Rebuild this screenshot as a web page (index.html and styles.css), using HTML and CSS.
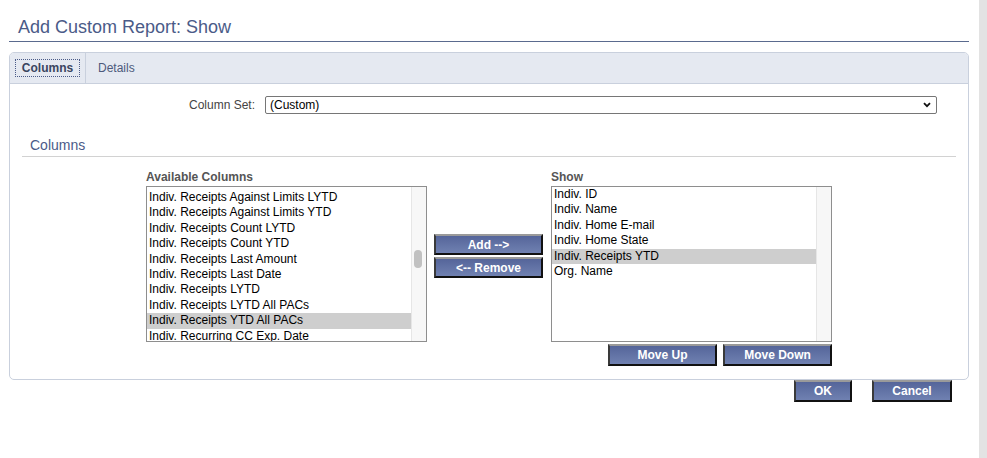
FILE: index.html
```html
<!DOCTYPE html>
<html lang="en">
<head>
<meta charset="utf-8">
<title>Add Custom Report: Show</title>
<link rel="stylesheet" href="styles.css">
</head>
<body>
<div class="page">
  <h1 class="page-title">Add Custom Report: Show</h1>

  <div class="panel">
    <div class="tabs">
      <div class="tab tab-active"><span class="tab-focus">Columns</span></div>
      <div class="tab">Details</div>
    </div>

    <div class="panel-body">
      <div class="set-row">
        <label class="set-label">Column Set:</label>
        <div class="select">
          <span class="select-value">(Custom)</span>
          <svg class="select-arrow" width="8" height="6" viewBox="0 0 8 6"><path d="M1 1.2 L4 4.2 L7 1.2" fill="none" stroke="#111" stroke-width="1.8"/></svg>
        </div>
      </div>

      <div class="section">
        <h2 class="section-title">Columns</h2>
      </div>

      <div class="picker">
        <div class="picker-col">
          <div class="list-label">Available Columns</div>
          <div class="listbox">
            <div class="list-items list-items-scrolled">
              <div class="list-item">Indiv. Receipts Against Limits LYTD</div>
              <div class="list-item">Indiv. Receipts Against Limits YTD</div>
              <div class="list-item">Indiv. Receipts Count LYTD</div>
              <div class="list-item">Indiv. Receipts Count YTD</div>
              <div class="list-item">Indiv. Receipts Last Amount</div>
              <div class="list-item">Indiv. Receipts Last Date</div>
              <div class="list-item">Indiv. Receipts LYTD</div>
              <div class="list-item">Indiv. Receipts LYTD All PACs</div>
              <div class="list-item is-selected">Indiv. Receipts YTD All PACs</div>
              <div class="list-item">Indiv. Recurring CC Exp. Date</div>
            </div>
            <div class="list-track"><div class="list-thumb"></div></div>
          </div>
        </div>

        <div class="picker-actions">
          <button class="btn btn-wide">Add --&gt;</button>
          <button class="btn btn-wide">&lt;-- Remove</button>
        </div>

        <div class="picker-col">
          <div class="list-label">Show</div>
          <div class="listbox">
            <div class="list-items">
              <div class="list-item">Indiv. ID</div>
              <div class="list-item">Indiv. Name</div>
              <div class="list-item">Indiv. Home E-mail</div>
              <div class="list-item">Indiv. Home State</div>
              <div class="list-item is-selected">Indiv. Receipts YTD</div>
              <div class="list-item">Org. Name</div>
            </div>
            <div class="list-track"></div>
          </div>
          <div class="order-buttons">
            <button class="btn btn-wide">Move Up</button>
            <button class="btn btn-wide">Move Down</button>
          </div>
        </div>
      </div>
    </div>
  </div>

  <div class="footer">
    <button class="btn btn-ok">OK</button>
    <button class="btn btn-cancel">Cancel</button>
  </div>
</div>
<div class="side-strip"></div>
</body>
</html>
```

FILE: styles.css
```css
* {
  box-sizing: border-box;
}

html, body {
  height: 100%;
}

body {
  margin: 0;
  display: flex;
  background: #fff;
  font-family: "Liberation Sans", Arial, sans-serif;
  font-size: 12px;
  color: #000;
}

.page {
  width: 979px;
  padding: 0 10px 0 9px;
}

.side-strip {
  width: 8px;
  background: #e3e3e3;
}

/* Title */
.page-title {
  margin: 0;
  padding: 16px 0 3px 9px;
  font-size: 18px;
  line-height: 22px;
  font-weight: normal;
  color: #4b5b88;
  border-bottom: 1px solid #5a6a8e;
}

/* Panel with tabs */
.panel {
  margin-top: 10px;
  border: 1px solid #c9d0dd;
  border-radius: 5px;
  overflow: hidden;
}

.tabs {
  display: flex;
  height: 31px;
  background: #e5e9f1;
  border-bottom: 1px solid #c9d0dd;
}

.tab {
  display: flex;
  align-items: center;
  padding: 0 12px;
  color: #4d5a7c;
  line-height: 14px;
}

.tab-active {
  width: 76px;
  justify-content: center;
  padding: 0;
  border-right: 1px solid #c9d0dd;
  font-weight: bold;
  color: #3a4560;
}

.tab-focus {
  display: inline-block;
  padding: 1px 6px;
  border: 1px dotted #4b5b88;
  line-height: 14px;
}

.panel-body {
  padding: 12px 0 13px;
}

/* Column set row */
.set-row {
  display: flex;
  align-items: center;
}

.set-label {
  width: 245px;
  margin-right: 10px;
  text-align: right;
  color: #444;
}

.select {
  width: 672px;
  height: 18px;
  display: flex;
  align-items: center;
  justify-content: space-between;
  padding: 0 5px 0 4px;
  border: 1px solid #767676;
  border-radius: 2px;
  background: #fff;
}

.select-value {
  line-height: 16px;
}

/* Section heading */
.section {
  margin: 23px 12px 0;
}

.section-title {
  margin: 0;
  padding: 0 0 3px 8px;
  font-size: 14px;
  line-height: 16px;
  font-weight: normal;
  color: #4b5b88;
  border-bottom: 1px solid #d2d2d2;
}

/* Two-list picker */
.picker {
  display: flex;
  margin: 13px 0 0 136px;
}

.picker-col {
  width: 281px;
  display: flex;
  flex-direction: column;
}

.list-label {
  font-weight: bold;
  color: #555;
  line-height: 14px;
  margin-bottom: 2px;
}

.listbox {
  height: 156px;
  display: flex;
  border: 1px solid #8e8e8e;
  background: #fff;
  overflow: hidden;
}

.list-items {
  flex: 1;
  overflow: hidden;
}

.list-items-scrolled {
  padding-top: 3px;
}

.list-item {
  height: 15.4px;
  line-height: 15.4px;
  padding-left: 2px;
  white-space: nowrap;
}

.list-item.is-selected {
  background: #cecece;
}

.list-track {
  width: 15px;
  flex: none;
  background: #f7f7f7;
  border-left: 1px solid #e6e6e6;
  padding: 63px 0 0 2px;
}

.list-thumb {
  width: 8px;
  height: 18px;
  border-radius: 4px;
  background: #c1c1c1;
}

.picker-actions {
  width: 109px;
  margin: 0 8px 0 7px;
  padding-top: 64px;
  display: flex;
  flex-direction: column;
  gap: 2px;
}

.order-buttons {
  display: flex;
  justify-content: flex-end;
  gap: 6px;
  margin-top: 2px;
}

/* Buttons */
.btn {
  height: 22px;
  padding: 0;
  font-family: "Liberation Sans", Arial, sans-serif;
  font-size: 12px;
  font-weight: bold;
  color: #fff;
  background: linear-gradient(#55659a, #7081b1);
  border-style: solid;
  border-width: 2px;
  border-color: #9a9a9a #111 #111 #3a3a3a;
  line-height: 18px;
}

.picker-actions .btn {
  height: 21px;
}

.btn-wide {
  width: 109px;
}

.btn-ok {
  width: 58px;
}

.btn-cancel {
  width: 80px;
}

.footer {
  display: flex;
  justify-content: flex-end;
  gap: 20px;
  padding-right: 17px;
}
```
